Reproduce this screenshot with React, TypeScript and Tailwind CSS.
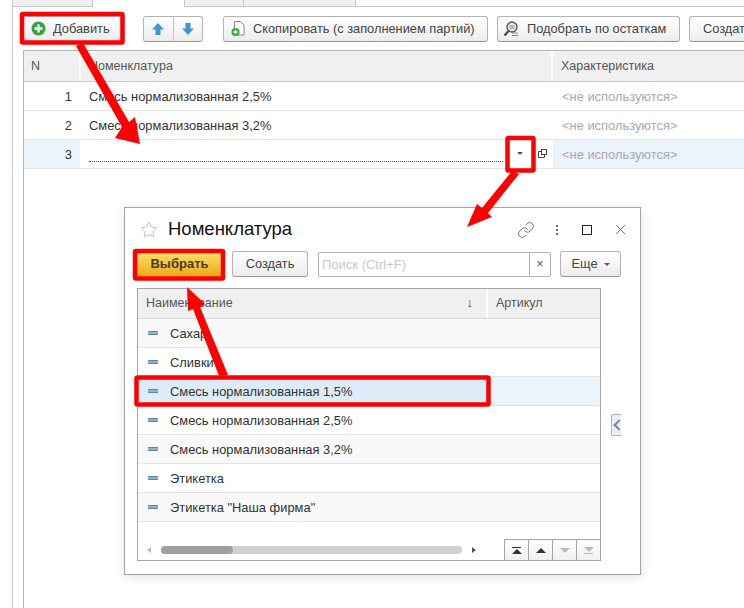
import { Link, Star, X } from 'lucide-react';

const font = { fontFamily: '"Liberation Sans", Arial, sans-serif' };

const btn = 'flex h-[26px] shrink-0 items-center whitespace-nowrap rounded-[3px] border border-[#b4b4b4] border-b-[#999] bg-gradient-to-b from-white to-[#ececec] text-[12.8px] text-[#444]';

function CaretDown({ className = '' }: { className?: string }) {
  return <span className={`inline-block h-0 w-0 border-x-[3px] border-t-[3px] border-x-transparent border-t-[#555] ${className}`} />;
}

function BlueArrow({ down }: { down?: boolean }) {
  return (
    <svg width="14" height="14" viewBox="0 0 14 14" className={down ? 'rotate-180' : ''}>
      <path d="M7 1 L13 7.5 H9.5 V13 H4.5 V7.5 H1 Z" fill="#3d98d8" />
    </svg>
  );
}

function Dash() {
  return <span className="h-[4px] w-[10px] shrink-0 rounded-[1px] border-t border-b border-[#5d83a3] bg-[#8fb2cf]" />;
}

const docRows = [
  { n: '1', name: 'Смесь нормализованная 2,5%' },
  { n: '2', name: 'Смесь нормализованная 3,2%' },
  { n: '3', name: '' },
];

const pickRows = ['Сахар', 'Сливки', 'Смесь нормализованная 1,5%', 'Смесь нормализованная 2,5%', 'Смесь нормализованная 3,2%', 'Этикетка', 'Этикетка "Наша фирма"'];

function Annotations() {
  return (
    <svg className="pointer-events-none absolute left-0 top-0" width="744" height="608" viewBox="0 0 744 608">
      <g fill="none" stroke="#ff0000" strokeWidth="4.5">
        <rect x="22" y="14" width="100.5" height="28.5" rx="1" />
        <rect x="507.5" y="138" width="26" height="32.5" rx="1" />
        <rect x="135" y="251" width="88" height="27.5" rx="1" />
        <rect x="136.5" y="377.5" width="352" height="27" rx="1" />
      </g>
      <g fill="#ff0000">
        <polygon points="76,46 83,43 129,122 135,117 140,144 115,138 122,127" />
        <polygon points="512,171 519,174 488,213 492,217 467,227 477,204 482,208" />
        <polygon points="219,376 228,375 200,307 205,304 187,287 188,311 193,309" />
      </g>
    </svg>
  );
}

function PickerDialog() {
  return (
    <div className="absolute left-[124px] top-[207px] flex h-[368px] w-[517px] flex-col border border-[#a5a5a5] bg-white px-[12px] shadow-[0_2px_10px_rgba(0,0,0,0.12)]">
      <div className="flex h-[43px] shrink-0 items-center">
        <Star size={18} strokeWidth={1} className="ml-[3px] text-[#aaa]" />
        <span className="ml-[10px] pb-[1px] text-[18.5px] text-[#111]">Номенклатура</span>
        <div className="ml-auto flex items-center text-[#444]">
          <Link size={18} strokeWidth={1} className="mr-[21px]" />
          <span className="mr-[24px] flex flex-col gap-[2px]">
            <i className="h-[2px] w-[2px] bg-[#666]" />
            <i className="h-[2px] w-[2px] bg-[#666]" />
            <i className="h-[2px] w-[2px] bg-[#666]" />
          </span>
          <span className="mr-[20px] h-[10px] w-[10px] border border-[#222]" />
          <X size={17} strokeWidth={1} className="-mr-[1px]" />
        </div>
      </div>

      <div className="flex h-[26px] shrink-0 items-center">
        <button className="h-[25px] w-[85px] rounded-[2px] bg-gradient-to-b from-[#ffe066] to-[#e8a800] text-[13px] font-bold text-[#4a3c10]">Выбрать</button>
        <button className={`${btn} ml-[10px] w-[76px] justify-center`}>Создать</button>
        <div className="ml-[10px] flex h-[25px] w-[233px] rounded-[2px] border border-[#b4b4b4]">
          <span className="flex-1 px-[3px] text-[13px] leading-[23px] text-[#c8c8c8]">Поиск (Ctrl+F)</span>
          <span className="flex w-[21px] items-center justify-center border-l border-[#b4b4b4] text-[12px] text-[#555]">×</span>
        </div>
        <button className={`${btn} ml-[9px] w-[61px] justify-center gap-[6px]`}>Еще <CaretDown /></button>
      </div>

      <div className="mt-[11px] flex h-[273px] w-[464px] flex-col border border-[#a5a5a5]">
        <div className="flex h-[30px] shrink-0 border-b border-[#d8d8d8] bg-[#f0f0f0] text-[12.5px] leading-[28px] text-[#555]">
          <div className="flex w-[350px] items-center justify-between border-r-2 border-[#fff] pb-[1px] pl-[8px] pr-[13px]">
            <span>Наименование</span>
            <span className="text-[13px] text-[#333]">↓</span>
          </div>
          <div className="pl-[8px]">Артикул</div>
        </div>
        {pickRows.map((row, i) => (
          <div key={row} className={`flex h-[29px] shrink-0 items-center border-b border-[#e4e4e4] text-[12.9px] text-[#333] ${i === 2 ? 'bg-[#ebf3fb]' : i % 2 === 0 ? 'bg-[#f9f9f9]' : 'bg-white'}`}>
            <div className={`flex h-full w-[350px] items-center pl-[10px] ${i === 2 ? 'bg-[#dcecf9]' : ''}`}>
              <Dash />
              <span className="ml-[12px] whitespace-nowrap pt-[2px]">{row}</span>
            </div>
          </div>
        ))}
        <div className="mt-auto flex h-[21px] items-end">
          <div className="flex h-full flex-1 items-center pl-[9px]">
            <span className="h-0 w-0 border-y-[3px] border-r-[4px] border-y-transparent border-r-[#bbb]" />
            <div className="ml-[10px] h-[8px] w-[301px] rounded-full bg-[#d2d2d2]">
              <div className="h-full w-[72px] rounded-full bg-[#a0a0a0]" />
            </div>
            <span className="ml-[10px] h-0 w-0 border-y-[3px] border-l-[4px] border-y-transparent border-l-[#555]" />
          </div>
          <div className="flex h-full">
            {[0, 1, 2, 3].map(k => (
              <div key={k} className="flex w-[24px] flex-col items-center justify-center border-l border-t border-[#a5a5a5] bg-gradient-to-b from-white to-[#f0f0f0]">
                {k === 0 && <span className="mb-[1px] h-[1px] w-[9px] bg-[#333]" />}
                {k < 2 && <span className="h-0 w-0 border-x-[5px] border-b-[5px] border-x-transparent border-b-[#333]" />}
                {k >= 2 && <span className="h-0 w-0 border-x-[5px] border-t-[5px] border-x-transparent border-t-[#bbb]" />}
                {k === 3 && <span className="mt-[1px] h-[1px] w-[9px] bg-[#bbb]" />}
              </div>
            ))}
          </div>
        </div>
      </div>

      <div className="absolute left-[486px] top-[206px] flex h-[22px] w-[10px] items-center justify-center rounded-l-[2px] border border-r-0 border-[#b4b4b4] bg-[#e8f1fa] text-[#888]">
        <span className="block h-[8px] w-[8px] translate-x-[2px] rotate-45 border-b-2 border-l-2 border-[#888]" />
      </div>
    </div>
  );
}

export default function App() {
  return (
    <div className="relative h-[608px] w-[744px] overflow-hidden bg-white" style={font}>
      <div className="flex h-[7px] items-end pl-[12px]">
        <div className="h-[7px] w-[81px] border-x border-b border-[#c8c8c8] bg-[#f0f0f0]" />
        <div className="h-[7px] w-[91px]" />
        <div className="h-[7px] w-[60px] border-x border-b border-[#c8c8c8] bg-[#f0f0f0]" />
        <div className="h-[7px] w-[112px] border-r border-b border-[#c8c8c8] bg-[#f0f0f0]" />
        <div className="h-[7px] flex-1 border-b border-[#c8c8c8]" />
      </div>

      <div className="ml-[12px] flex h-[611px] border-l border-[#c8c8c8]">
        <div className="flex w-[731px] shrink-0 flex-col pl-[10px]">
          <div className="flex h-[43px] shrink-0 items-center gap-[9px]">
            <button className={`${btn} w-[100px] gap-[7px] pl-[7px]`}>
              <svg width="15" height="15" viewBox="0 0 15 15">
                <circle cx="7.5" cy="7.5" r="7" fill="#35a244" />
                <path d="M7.5 3.5v8M3.5 7.5h8" stroke="#fff" strokeWidth="2.4" />
              </svg>
              Добавить
            </button>
            <div className={`${btn} ml-[11px] w-[60px]`}>
              <span className="flex h-full w-[30px] items-center justify-center border-r border-[#c4c4c4]"><BlueArrow /></span>
              <span className="flex h-full w-[29px] items-center justify-center"><BlueArrow down /></span>
            </div>
            <button className={`${btn} ml-[11px] w-[265px] gap-[7px] pl-[7px]`}>
              <svg width="15" height="17" viewBox="0 0 15 17">
                <path d="M3.5 1.5h6l3.5 3.5v10h-9.5z" fill="#fff" stroke="#888" />
                <circle cx="4.5" cy="12" r="4" fill="#35a244" />
                <path d="M4.5 9.8v4.4M2.3 12h4.4" stroke="#fff" strokeWidth="1.3" />
              </svg>
              Скопировать (с заполнением партий)
            </button>
            <button className={`${btn} w-[183px] gap-[8px] pl-[5px]`}>
              <svg width="16" height="16" viewBox="0 0 16 16">
                <circle cx="9" cy="6" r="5" fill="#e6e6e6" stroke="#555" strokeWidth="1.4" />
                <path d="M5.5 10 L1.5 14.5" stroke="#444" strokeWidth="2.2" />
                <path d="M6.5 5h5M6.5 7h5M9 12h6M9 14.5h6" stroke="#888" />
              </svg>
              Подобрать по остаткам
            </button>
            <button className={`${btn} w-[80px] pl-[13px]`}>Создать</button>
          </div>

          <div className="flex min-h-0 w-[740px] flex-1 flex-col border-l border-t border-[#b4b4b4] text-[12.9px] text-[#333]">
            <div className="flex h-[31px] shrink-0 border-b border-[#c8c8c8] bg-[#f0f0f0] text-[12.5px] leading-[30px] text-[#555]">
              <div className="w-[57px] border-r-2 border-white pl-[7px]">N</div>
              <div className="w-[472px] border-r-2 border-[#fff] pl-[8px]">Номенклатура</div>
              <div className="pl-[8px]">Характеристика</div>
            </div>
            {docRows.map(row => {
              const active = row.n === '3';
              return (
                <div key={row.n} className="flex h-[29px] shrink-0 items-center border-b border-[#e4e4e4]">
                  <div className={`h-full w-[56px] pr-[8px] text-right leading-[30px] ${active ? 'bg-[#ebf3fb]' : ''}`}>{row.n}</div>
                  <div className="relative flex h-full w-[473px] items-center pl-[9px] pt-[2px]">
                    {row.name}
                    {active && (
                      <>
                        <span className="absolute left-[9px] top-[21px] w-[414px] border-t border-dotted border-[#e02020]" />
                        <CaretDown className="absolute left-[437px] top-[12px]" />
                        <svg className="absolute left-[458px] top-[9px]" width="9" height="9" viewBox="0 0 9 9" fill="none" stroke="#444">
                          <rect x="3.5" y="0.5" width="5" height="5" />
                          <path d="M3.5 2.5h-3v6h6v-3" />
                        </svg>
                      </>
                    )}
                  </div>
                  <div className={`h-full flex-1 pl-[9px] leading-[30px] text-[#a8a8b4] ${active ? 'bg-[#ebf3fb]' : ''}`}>&lt;не используются&gt;</div>
                </div>
              );
            })}
          </div>
        </div>
      </div>

      <PickerDialog />
      <Annotations />
    </div>
  );
}
